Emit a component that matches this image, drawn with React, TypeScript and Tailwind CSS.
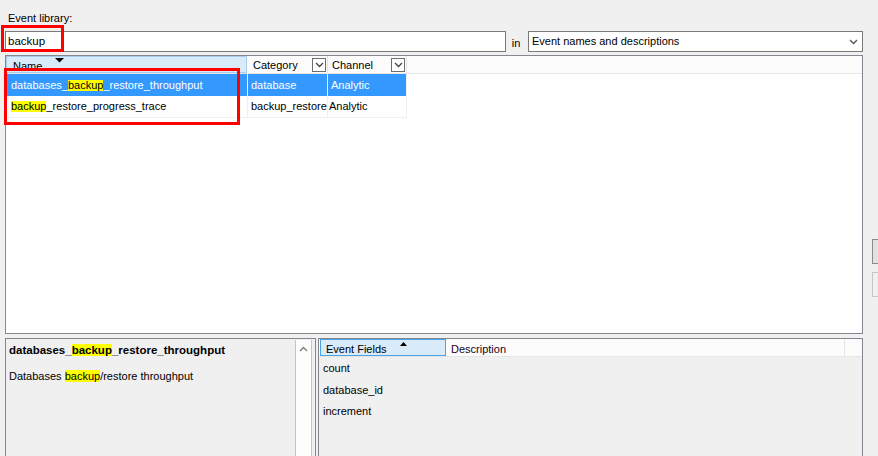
import React from "react";

const HL = ({ children }: { children: React.ReactNode }) => (
  <span className="bg-[#ffff00] text-black">{children}</span>
);

const Chevron = ({ className }: { className?: string }) => (
  <svg width="9" height="6" viewBox="0 0 9 6" className={className}>
    <path d="M1 1 L4.5 4.5 L8 1" fill="none" stroke="currentColor" strokeWidth="1.3" />
  </svg>
);

const FilterBtn = () => (
  <div className="w-[14px] h-[14px] border border-[#6d6d6d] bg-white flex items-center justify-center text-[#444]">
    <Chevron />
  </div>
);

export default function App() {
  return (
    <div className="w-[878px] h-[456px] bg-[#f0f0f0] overflow-hidden relative text-[11px] leading-none text-black font-['Liberation_Sans',Arial,sans-serif]">
      <div className="flex">
        <div className="w-[858px] ml-[5px] flex flex-col shrink-0">
          <div className="h-[31px] pt-[13px] pl-[3px]">Event library:</div>
          <div className="flex h-[21px]">
            <div className="w-[501px] h-[21px] border border-[#7a7a7a] bg-white pl-[2px] flex items-center text-[11.5px]">
              backup
            </div>
            <div className="w-[22px] flex items-end justify-center pb-[3px] pr-[2px]">in</div>
            <div className="w-[335px] h-[21px] border border-[#7a7a7a] bg-white pl-[3px] pr-[4px] flex items-center justify-between">
              <span>Event names and descriptions</span>
              <Chevron className="text-[#555]" />
            </div>
          </div>

          {/* main grid */}
          <div className="mt-[3px] h-[279px] border border-[#828790] bg-white flex flex-col">
            <div className="h-[18px] flex border-b border-[#e5e5e5] bg-[#fcfcfc]">
              <div className="relative w-[241px] h-[17px] bg-[#d9ebf9] border border-[#a6cdee] pl-[6px] flex items-center">
                <span className="pt-[4px]">Name</span>
                <svg width="9" height="5" viewBox="0 0 9 5" className="absolute left-[48px] top-[1px]">
                  <path d="M0 0 L9 0 L4.5 4.5 Z" fill="#000" />
                </svg>
              </div>
              <div className="w-[80px] flex items-center justify-between pl-[5px] pr-[1px] border-r border-[#e5e5e5] ml-[1px]">
                <span className="pt-[2px]">Category</span>
                <FilterBtn />
              </div>
              <div className="w-[79px] flex items-center justify-between pl-[4px] pr-[1px] border-r border-[#e5e5e5]">
                <span className="pt-[2px]">Channel</span>
                <FilterBtn />
              </div>
            </div>
            <div className="flex h-[22px]">
              <div className="w-[242px] bg-[#3399ff] text-white flex items-center pl-[5px] border-r border-[#f0f0f0]">
                databases_<HL>backup</HL>_restore_throughput
              </div>
              <div className="w-[80px] bg-[#3399ff] text-white flex items-center pl-[3px] border-r border-[#f0f0f0]">
                database
              </div>
              <div className="w-[79px] bg-[#3399ff] text-white flex items-center pl-[3px] border-r border-[#f0f0f0]">
                Analytic
              </div>
            </div>
            <div className="flex h-[22px]">
              <div className="w-[242px] flex items-center pl-[5px] border-r border-b border-[#f0f0f0]">
                <HL>backup</HL>_restore_progress_trace
              </div>
              <div className="w-[80px] flex items-center pl-[3px] border-r border-b border-[#f0f0f0] whitespace-nowrap overflow-hidden">
                backup_restore
              </div>
              <div className="w-[79px] flex items-center pl-[1px] border-r border-b border-[#f0f0f0]">
                Analytic
              </div>
            </div>
          </div>

          {/* bottom panels */}
          <div className="mt-[4px] h-[130px] flex">
            <div className="w-[311px] border border-[#828790] flex p-[1px]">
              <div className="flex-1 pl-[2px] pt-[5px]">
                <div className="font-bold text-[11.5px]">
                  databases_<HL>backup</HL>_restore_throughput
                </div>
                <div className="mt-[14px] text-[11px]">
                  Databases <HL>backup</HL>/restore throughput
                </div>
              </div>
              <div className="w-[17px] bg-[#fdfdfd] border-x border-[#c4c4c4] flex flex-col items-center pt-[6px] mr-[2px] text-[#7a7a7a]">
                <Chevron className="rotate-180" />
              </div>
            </div>
            <div className="ml-[2px] w-[545px] border border-[#828790] flex flex-col">
              <div className="h-[18px] flex bg-[#fcfcfc] border-b border-[#e5e5e5]">
                <div className="relative w-[126px] ml-[1px] h-[17px] bg-[#d9ebf9] border border-[#4aa3e6] pl-[5px] flex items-center">
                  <span className="pt-[3px]">Event Fields</span>
                  <svg width="7" height="4" viewBox="0 0 7 4" className="absolute left-[79px] top-[2px]">
                    <path d="M0 4 L7 4 L3.5 0 Z" fill="#000" />
                  </svg>
                </div>
                <div className="w-[398px] ml-[1px] border-r border-[#e5e5e5] pl-[4px] flex items-center">
                  <span className="pt-[3px] text-[#200020]">Description</span>
                </div>
              </div>
              <div className="flex flex-col pl-[4px]">
                <div className="h-[22px] flex items-center">count</div>
                <div className="h-[22px] flex items-center">database_id</div>
                <div className="h-[21px] flex items-center">increment</div>
              </div>
            </div>
          </div>
        </div>
        <div className="ml-[9px] pt-[239px] flex flex-col gap-[8px] shrink-0">
          <div className="w-[20px] h-[25px] bg-[#e1e1e1] border border-[#8a8a8a]" />
          <div className="w-[20px] h-[25px] bg-[#f0f0f0] border border-[#c6c6c6]" />
        </div>
      </div>

      {/* annotation boxes */}
      <div className="absolute left-[1px] top-[25px] w-[63px] h-[27px] border-[3px] border-[#ff0000]" />
      <div className="absolute left-[4px] top-[68px] w-[236px] h-[57px] border-[3px] border-[#ff0000]" />
    </div>
  );
}
